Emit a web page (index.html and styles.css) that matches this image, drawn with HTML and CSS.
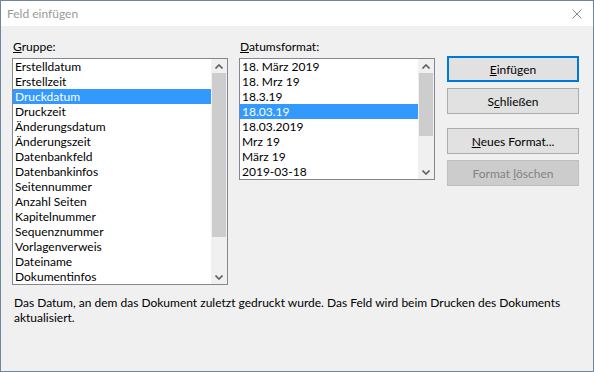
FILE: index.html
```html
<!DOCTYPE html>
<html lang="de">
  <head>
    <meta charset="UTF-8" />
    <meta name="viewport" content="width=device-width, initial-scale=1.0" />
    <title>Feld einfügen</title>
    <link rel="stylesheet" href="styles.css">
  </head>
  <body>
    <div class="fenster">
      <header class="titel">
        <span>Feld einfügen</span>
        <svg class="schliessen-x" width="10" height="10" viewBox="0 0 10 10">
          <path d="M0.5 0.5 L9.5 9.5 M9.5 0.5 L0.5 9.5" stroke="#8c8c8c" stroke-width="1" fill="none" />
        </svg>
      </header>

      <main class="inhalt">
        <div class="reihe">
          <section class="spalte gruppe">
            <label><u>G</u>ruppe:</label>
            <div class="liste hoch">
              <ul>
                <li>Erstelldatum</li>
                <li>Erstellzeit</li>
                <li class="valgt">Druckdatum</li>
                <li>Druckzeit</li>
                <li>Änderungsdatum</li>
                <li>Änderungszeit</li>
                <li>Datenbankfeld</li>
                <li>Datenbankinfos</li>
                <li>Seitennummer</li>
                <li>Anzahl Seiten</li>
                <li>Kapitelnummer</li>
                <li>Sequenznummer</li>
                <li>Vorlagenverweis</li>
                <li>Dateiname</li>
                <li>Dokumentinfos</li>
              </ul>
              <div class="scrollbar">
                <div class="pil">
                  <svg width="8" height="5" viewBox="0 0 8 5"><polyline points="0.5,4.5 4,1 7.5,4.5" stroke="#606060" stroke-width="1.6" fill="none" /></svg>
                </div>
                <div class="spor"><div class="greb greb-gruppe"></div></div>
                <div class="pil">
                  <svg width="8" height="5" viewBox="0 0 8 5"><polyline points="0.5,0.5 4,4 7.5,0.5" stroke="#606060" stroke-width="1.6" fill="none" /></svg>
                </div>
              </div>
            </div>
          </section>

          <section class="spalte format">
            <label><u>D</u>atumsformat:</label>
            <div class="liste lav">
              <ul>
                <li>18. März 2019</li>
                <li>18. Mrz 19</li>
                <li>18.3.19</li>
                <li class="valgt">18.03.19</li>
                <li>18.03.2019</li>
                <li>Mrz 19</li>
                <li>März 19</li>
                <li>2019-03-18</li>
              </ul>
              <div class="scrollbar">
                <div class="pil">
                  <svg width="8" height="5" viewBox="0 0 8 5"><polyline points="0.5,4.5 4,1 7.5,4.5" stroke="#606060" stroke-width="1.6" fill="none" /></svg>
                </div>
                <div class="spor"><div class="greb greb-format"></div></div>
                <div class="pil">
                  <svg width="8" height="5" viewBox="0 0 8 5"><polyline points="0.5,0.5 4,4 7.5,0.5" stroke="#606060" stroke-width="1.6" fill="none" /></svg>
                </div>
              </div>
            </div>
          </section>

          <nav class="knapper">
            <button class="standard"><u>E</u>infügen</button>
            <button>S<u>c</u>hließen</button>
            <button class="afstand"><u>N</u>eues Format...</button>
            <button class="slukket" disabled>Format <u>l</u>öschen</button>
          </nav>
        </div>

        <p class="beskrivelse">Das Datum, an dem das Dokument zuletzt gedruckt wurde. Das Feld wird beim Drucken des Dokuments aktualisiert.</p>
      </main>
    </div>
  </body>
</html>
```

FILE: styles.css
```css
* {
  box-sizing: border-box;
}
body {
  margin: 0;
  background-color: #f0f0f0;
  font-family: "Lato", "Noto Sans", sans-serif;
  font-size: 12px;
  color: #000;
}
.fenster {
  width: 594px;
  height: 372px;
  border: 1px solid #6e86a0;
  background-color: #f0f0f0;
  display: flex;
  flex-direction: column;
}
.titel {
  height: 25px;
  background-color: #fff;
  display: flex;
  align-items: center;
  justify-content: space-between;
  padding: 0 11px 0 6px;
  color: #999;
}
.inhalt {
  padding: 13px 14px 0 11px;
}
.reihe {
  display: flex;
  align-items: flex-start;
}
.spalte {
  display: flex;
  flex-direction: column;
}
.spalte label {
  line-height: 15px;
  padding-left: 1px;
  margin-bottom: 4px;
}
.gruppe {
  width: 216px;
}
.format {
  width: 196px;
  margin-left: 11px;
}
.liste {
  display: flex;
  background-color: #fff;
  border: 1px solid #828790;
}
.hoch {
  height: 227px;
}
.lav {
  height: 122px;
}
.liste ul {
  flex: 1;
  list-style: none;
  margin: 0;
  padding: 0;
}
.liste li {
  height: 15px;
  line-height: 15px;
  padding-left: 2px;
  white-space: nowrap;
}
.liste li.valgt {
  background-color: #3399ff;
  color: #fff;
}
.scrollbar {
  width: 16px;
  background-color: #f0f0f0;
  display: flex;
  flex-direction: column;
}
.pil {
  height: 14px;
  display: flex;
  align-items: center;
  justify-content: center;
}
.spor {
  flex: 1;
}
.greb {
  background-color: #cdcdcd;
  margin: 0 1px;
}
.greb-gruppe {
  height: 164px;
}
.greb-format {
  height: 63px;
}
.knapper {
  display: flex;
  flex-direction: column;
  gap: 6px;
  margin-left: 12px;
  margin-top: 17px;
}
button {
  width: 132px;
  height: 26px;
  background-color: #e1e1e1;
  border: 1px solid #adadad;
  font-family: "Lato", "Noto Sans", sans-serif;
  font-size: 12px;
  color: #000;
  padding: 0;
}
.standard {
  border: 2px solid #0078d7;
}
.afstand {
  margin-top: 8px;
}
.slukket {
  background-color: #cccccc;
  border-color: #bfbfbf;
  color: #838383;
}
.beskrivelse {
  margin: 10px 0 0 2px;
  line-height: 15px;
  width: 560px;
}
```
